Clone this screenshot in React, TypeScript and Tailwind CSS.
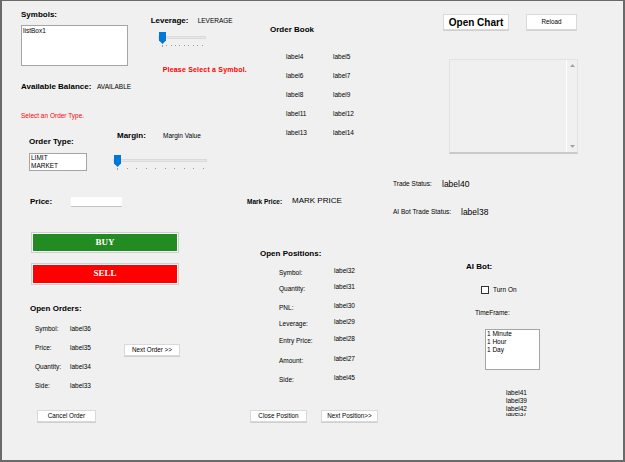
const small = "text-[6.5px] leading-[8px]";
const head = "text-[8px] leading-[10px] font-bold";

function Btn({ label, className }: { label: string; className: string }) {
  return (
    <div
      className={`flex items-center justify-center bg-white border border-[#d9d9d9] shadow-[0_1px_0_#d0d0d0] whitespace-nowrap ${className}`}
    >
      {label}
    </div>
  );
}

function Slider({ className }: { className: string }) {
  const ticks = Array.from({ length: 10 });
  return (
    <div className={`relative h-[16px] ${className}`}>
      <div className="absolute left-0 right-0 top-[5px] h-[3px] bg-[#e7e7e7] border border-[#dadada]" />
      <svg className="absolute left-[1px] top-[1px]" width="7" height="12" viewBox="0 0 7 12">
        <path d="M0 0 H7 V8.5 L3.5 12 L0 8.5 Z" fill="#0078d7" />
      </svg>
      <div className="absolute left-[4px] right-[3px] top-[14px] flex justify-between">
        {ticks.map((_, i) => (
          <div key={i} className={`w-px bg-[#9a9a9a] ${i === 0 ? "h-[2px]" : "h-px"}`} />
        ))}
      </div>
    </div>
  );
}

export default function App() {
  const orders = [
    ["Symbol:", "label36"],
    ["Price:", "label35"],
    ["Quantity:", "label34"],
    ["Side:", "label33"],
  ];

  const book = [
    ["label4", "label5"],
    ["label6", "label7"],
    ["label8", "label9"],
    ["label11", "label12"],
    ["label13", "label14"],
  ];

  const positions = [
    ["Symbol:", "label32", "mt-[8px]"],
    ["Quantity:", "label31", "mt-[6px]"],
    ["PNL:", "label30", "mt-[9px]"],
    ["Leverage:", "label29", "mt-[6px]"],
    ["Entry Price:", "label28", "mt-[7px]"],
    ["Amount:", "label27", "mt-[10px]"],
    ["Side:", "label45", "mt-[9px]"],
  ];

  return (
    <div className="w-[625px] h-[462px] flex bg-[#f0f0f0] border-t border-l-2 border-r-2 border-b-2 border-[#6a6a6a] text-black font-['Liberation_Sans',Arial,sans-serif] overflow-hidden">
      {/* left column: symbol, order entry, open orders */}
      <div className="flex flex-col w-[245px] pl-[19px] pt-[9px]">
        <div className="flex h-[64px]">
          <div className="flex flex-col w-[108px]">
            <div className={head}>Symbols:</div>
            <div className={`mt-[5px] h-[41px] bg-white border border-[#a5a5a5] px-[1px] pt-[1px] ${small}`}>listBox1</div>
          </div>
          <div className="flex flex-col ml-[23px] pt-[6px]">
            <div className="flex items-center h-[10px]">
              <span className={`${head} w-[47px]`}>Leverage:</span>
              <span className={small}>LEVERAGE</span>
            </div>
            <Slider className="mt-[5px] ml-[7px] w-[48px]" />
            <div className="mt-[19px] ml-[12px] text-[#ff0000] font-bold text-[7px] leading-[8px] tracking-[0.2px] whitespace-nowrap">
              Please Select a Symbol.
            </div>
          </div>
        </div>

        <div className="flex items-center h-[10px] mt-[8px]">
          <span className={`${head} w-[76px]`}>Available Balance:</span>
          <span className={small}>AVAILABLE</span>
        </div>

        <div className={`mt-[20px] text-[#ff0000] ${small}`}>Select an Order Type.</div>

        <div className="flex mt-[11px]">
          <div className="flex flex-col ml-[8px] w-[58px] pt-[6px]">
            <div className={head}>Order Type:</div>
            <div className={`mt-[6px] h-[18px] bg-white border border-[#a5a5a5] px-[1px] ${small}`}>
              <div>LIMIT</div>
              <div>MARKET</div>
            </div>
          </div>
          <div className="flex flex-col ml-[26px]">
            <div className="flex items-center h-[10px] ml-[4px]">
              <span className={`${head} w-[46px]`}>Margin:</span>
              <span className={small}>Margin Value</span>
            </div>
            <Slider className="mt-[13px] w-[94px]" />
          </div>
        </div>

        <div className="flex items-center h-[10px] mt-[26px] ml-[9px]">
          <span className={`${head} w-[41px]`}>Price:</span>
          <div className="w-[51px] h-[10px] bg-white border-b border-[#c4c4c4]" />
        </div>

        <div className="mt-[25px] ml-[10px] w-[148px] h-[21px] border border-[#cfcfcf] p-px bg-[#f7f7f7]">
          <div className="h-full flex items-center justify-center bg-[#228b22] text-white font-bold text-[9px] font-['Liberation_Serif',serif]">
            BUY
          </div>
        </div>
        <div className="mt-[10px] ml-[10px] w-[148px] h-[22px] border border-[#cfcfcf] p-px bg-[#f7f7f7]">
          <div className="h-full flex items-center justify-center bg-[#ff0000] text-white font-bold text-[9px] font-['Liberation_Serif',serif]">
            SELL
          </div>
        </div>

        <div className={`mt-[19px] ml-[9px] ${head}`}>Open Orders:</div>

        <div className="flex mt-[5px] ml-[14px]">
          <div className="flex flex-col w-[89px]">
            {orders.map(([k, v]) => (
              <div key={k} className={`flex items-center h-[19px] ${small}`}>
                <span className="w-[35px]">{k}</span>
                <span>{v}</span>
              </div>
            ))}
          </div>
          <Btn label="Next Order >>" className="mt-[25px] w-[56px] h-[12px] text-[6.3px]" />
        </div>

        <Btn label="Cancel Order" className="mt-[15px] ml-[16px] w-[59px] h-[12px] text-[6.3px]" />
      </div>

      {/* middle column: order book, mark price, positions */}
      <div className="flex flex-col w-[146px] pt-[24px]">
        <div className={`ml-[23px] ${head}`}>Order Book</div>
        <div className="mt-[12px] ml-[39px] flex flex-col">
          {book.map(([a, b]) => (
            <div key={a} className={`flex items-center h-[19.2px] ${small}`}>
              <span className="w-[47px]">{a}</span>
              <span>{b}</span>
            </div>
          ))}
        </div>

        <div className="flex items-center h-[10px] mt-[54px]">
          <span className="w-[45px] text-[6.5px] font-bold">Mark Price:</span>
          <span className="text-[8px] leading-[10px] -mt-[2px]">MARK PRICE</span>
        </div>

        <div className={`mt-[42px] ml-[13px] ${head}`}>Open Positions:</div>

        <div className="flex flex-col ml-[32px]">
          {positions.map(([k, v, m]) => (
            <div key={k} className={`flex items-start h-[10px] ${m} ${small}`}>
              <span className="w-[55px] pt-[2px]">{k}</span>
              <span>{v}</span>
            </div>
          ))}
        </div>

        <div className="flex mt-[26px] ml-[3px]">
          <Btn label="Close Position" className="w-[57px] h-[12px] text-[6.3px]" />
          <Btn label="Next Position>>" className="ml-[14px] w-[57px] h-[12px] text-[6.3px]" />
        </div>
      </div>

      {/* right column: chart, status, AI bot */}
      <div className="flex flex-col flex-1 pt-[13px]">
        <div className="flex ml-[50px]">
          <Btn label="Open Chart" className="w-[66px] h-[16px] text-[10px] font-bold" />
          <Btn label="Reload" className="ml-[17px] w-[51px] h-[16px] text-[6.3px]" />
        </div>

        <div className="mt-[29px] ml-[56px] w-[129px] h-[95px] flex border border-[#e2e2e2] border-b-2 border-b-[#c9c9c9] bg-[#f0f0f0]">
          <div className="flex-1" />
          <div className="w-[11px] border-l border-white flex flex-col items-center justify-between py-[4px]">
            <svg width="5" height="3" viewBox="0 0 5 3">
              <path d="M0 3 L2.5 0 L5 3 Z" fill="#a3a3a3" />
            </svg>
            <svg width="5" height="3" viewBox="0 0 5 3">
              <path d="M0 0 L5 0 L2.5 3 Z" fill="#a3a3a3" />
            </svg>
          </div>
        </div>

        <div className="flex items-center h-[10px] mt-[25px]">
          <span className={`w-[49px] ${small}`}>Trade Status:</span>
          <span className="text-[8.5px]">label40</span>
        </div>
        <div className="flex items-center h-[10px] mt-[18px]">
          <span className={`w-[68px] ${small}`}>AI Bot Trade Status:</span>
          <span className="text-[8.5px]">label38</span>
        </div>

        <div className={`mt-[45px] ml-[73px] ${head}`}>AI Bot:</div>

        <div className="flex items-center h-[9px] mt-[13px] ml-[88px]">
          <div className="w-[8px] h-[8px] bg-white border border-[#333]" />
          <span className={`ml-[4px] ${small}`}>Turn On</span>
        </div>

        <div className={`mt-[15px] ml-[82px] ${small}`}>TimeFrame:</div>

        <div className={`mt-[12px] ml-[92px] w-[55px] h-[41px] bg-white border border-[#a5a5a5] px-[1px] ${small}`}>
          <div>1 Minute</div>
          <div>1 Hour</div>
          <div>1 Day</div>
        </div>

        <div className={`mt-[19px] ml-[113px] flex flex-col ${small}`}>
          <div>label41</div>
          <div>label39</div>
          <div className="relative z-10 bg-[#f0f0f0] w-[22px]">label42</div>
          <div className="-mt-[3px]">label37</div>
        </div>
      </div>
    </div>
  );
}
